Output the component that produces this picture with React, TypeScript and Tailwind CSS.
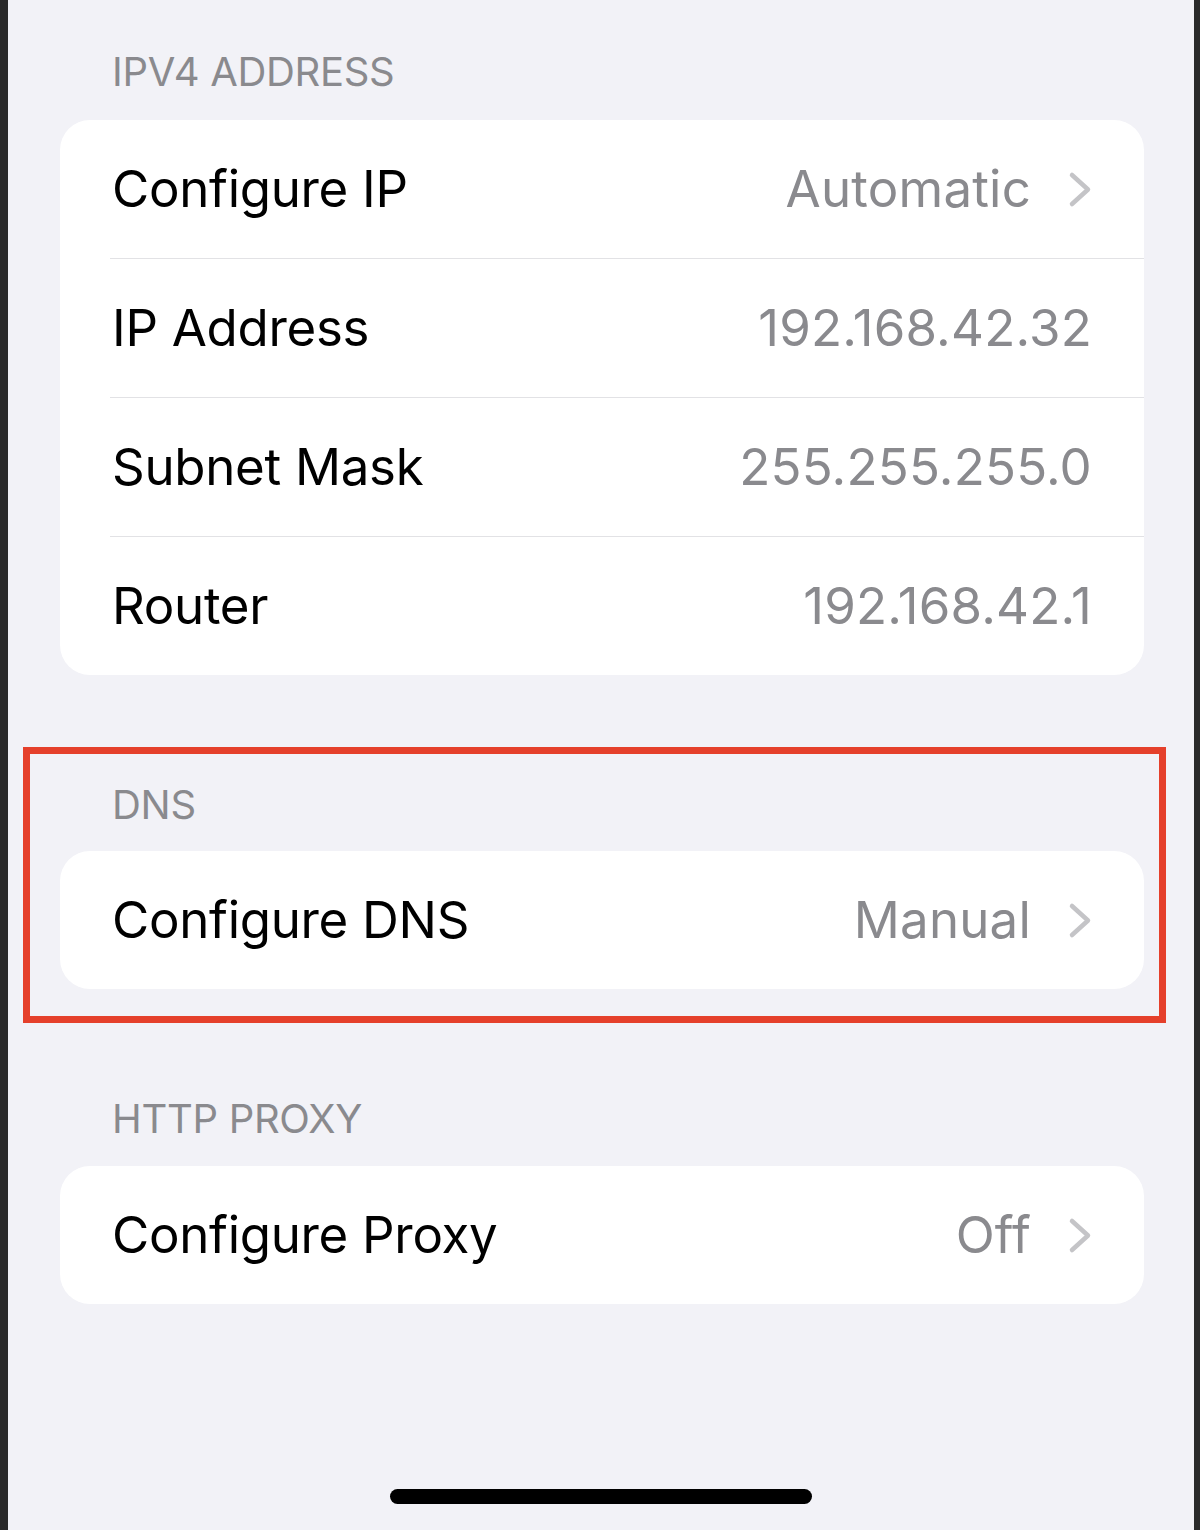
import React from "react";

type Row = { label: string; value: string; chevron?: boolean };

const Chevron: React.FC = () => (
  <svg width="24" height="37" viewBox="0 0 24 37" className="shrink-0">
    <polyline
      points="4,4 20,18.5 4,33"
      fill="none"
      stroke="#c4c4c7"
      strokeWidth="4.5"
      strokeLinecap="round"
      strokeLinejoin="round"
    />
  </svg>
);

const SectionHeader: React.FC<{ title: string }> = ({ title }) => (
  <div className="pl-[52px] h-[40px] text-[40px] leading-[40px] text-[#8a8a8e]">{title}</div>
);

const Card: React.FC<{ rows: Row[]; className?: string }> = ({ rows, className }) => (
  <div className={"bg-white rounded-[30px] overflow-hidden " + (className ?? "")}>
    {rows.map((row, i) => (
      <div key={row.label}>
        {i > 0 && <div className="ml-[50px] h-px bg-[#e2e2e5]" />}
        <div className="h-[138px] flex items-center pl-[52px] pr-[52px] text-[51px]">
          <span className="text-black flex-1">{row.label}</span>
          <span className="text-[#8a8a8e] tracking-[0.2px]">{row.value}</span>
          {row.chevron && (
            <span className="ml-[37px] flex items-center">
              <Chevron />
            </span>
          )}
        </div>
      </div>
    ))}
  </div>
);

const App: React.FC = () => {
  const ipv4: Row[] = [
    { label: "Configure IP", value: "Automatic", chevron: true },
    { label: "IP Address", value: "192.168.42.32" },
    { label: "Subnet Mask", value: "255.255.255.0" },
    { label: "Router", value: "192.168.42.1" },
  ];

  return (
    <div className="w-full h-[1530px] flex font-['Inter',sans-serif] tracking-[-0.3px]">
      <div className="w-[8px] bg-[#2a2a2a]" />
      <div className="flex-1 flex flex-col bg-[#f2f2f7]">
        {/* IPv4 */}
        <div className="pt-[52px] ml-[52px] mr-[50px]">
          <SectionHeader title="IPV4 ADDRESS" />
          <Card rows={ipv4} className="mt-[28px]" />
        </div>

        {/* DNS, highlighted */}
        <div className="mt-[72px] ml-[15px] mr-[28px] border-[7px] border-[#e5402b] pl-[30px] pr-[15px] pt-[31px] pb-[27px]">
          <SectionHeader title="DNS" />
          <Card rows={[{ label: "Configure DNS", value: "Manual", chevron: true }]} className="mt-[26px]" />
        </div>

        {/* HTTP proxy */}
        <div className="mt-[76px] ml-[52px] mr-[50px]">
          <SectionHeader title="HTTP PROXY" />
          <Card rows={[{ label: "Configure Proxy", value: "Off", chevron: true }]} className="mt-[27px]" />
        </div>

        <div className="mt-auto mb-[26px] mx-auto w-[422px] h-[15px] rounded-full bg-black" />
      </div>
      <div className="w-[6px] bg-[#2a2a2a]" />
    </div>
  );
};

export default App;
